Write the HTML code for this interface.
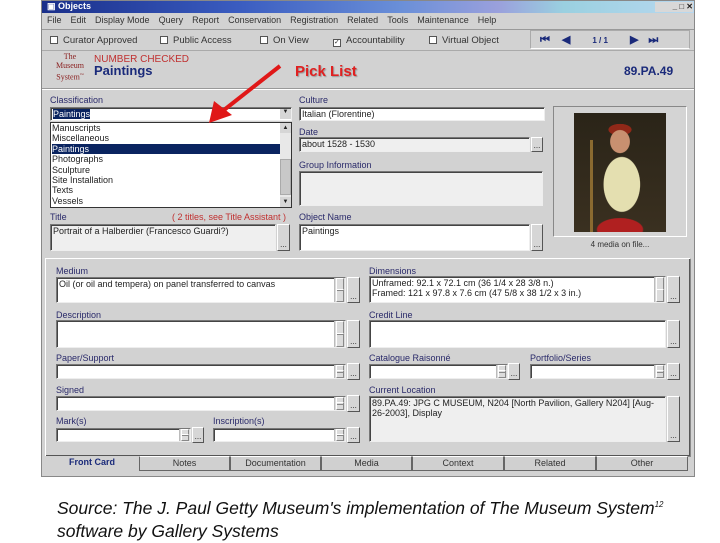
<!DOCTYPE html>
<html><head><style>
*{margin:0;padding:0;box-sizing:border-box}
body{width:720px;height:540px;background:#fff;position:relative;overflow:hidden;font-family:"Liberation Sans",sans-serif;font-size:9px;color:#222}
.a{position:absolute}
.win{left:41px;top:0;width:654px;height:477px;background:#d2d2d2;border:1px solid #888}
.lbl{position:absolute;font-size:9px;color:#2a2a6a;white-space:nowrap}
.box{position:absolute;background:#fff;border:1px solid #777;border-right-color:#eee;border-bottom-color:#eee;box-shadow:inset 1px 1px 0 #444;font-size:9px;padding:1px 2px;white-space:nowrap;overflow:hidden}
.g{background:#efefef}
.btn{position:absolute;background:#d6d6d6;border:1px solid;border-color:#fff #555 #555 #fff;font-size:8px;text-align:center;line-height:6px}
.btn:after{content:"...";position:absolute;bottom:2px;left:0;right:0}
.spin{position:absolute;width:11px;background:#dcdcdc;border-left:1px solid #bbb}
.spin:before,.spin:after{content:"";position:absolute;left:1px;right:1px;height:45%;border:1px solid;border-color:#fff #888 #888 #fff}
.spin:before{top:0}.spin:after{bottom:0}
.tab{position:absolute;top:456px;height:15px;border:1px solid #666;border-top-color:#fff;background:#d0d0d0;font-size:9px;text-align:center;line-height:13px;color:#333}
.cb{position:absolute;top:35px;font-size:9.5px;color:#333;white-space:nowrap}
.cb i{display:inline-block;width:8px;height:8px;border:1px solid #555;background:#fff;margin-right:5px;vertical-align:-1px;font-style:normal;font-size:7px;line-height:6px}
.menu span{margin-right:9px}
</style></head><body>
<div class="a win"></div>
<div class="a" style="left:42px;top:1px;width:652px;height:12px;background:linear-gradient(90deg,#1a2f8a,#3a5cc0 30%,#6a8fd8 55%,#9aa0dc 70%,#9ad0e0 80%,#b8d8f0)"></div>
<div class="a" style="left:47px;top:1px;color:#fff;font-weight:bold;font-size:9px">▣ Objects</div>
<div class="a" style="left:655px;top:2px;width:38px;height:10px;background:#d8d8d8;font-size:8px;text-align:right;font-weight:bold">_ □ ✕</div>
<div class="a menu" style="left:47px;top:15px;font-size:9px;color:#333;white-space:nowrap"><span>File</span><span>Edit</span><span>Display Mode</span><span>Query</span><span>Report</span><span>Conservation</span><span>Registration</span><span>Related</span><span>Tools</span><span>Maintenance</span><span>Help</span></div>
<div class="a" style="left:42px;top:29px;width:652px;height:1px;background:#999"></div>
<div class="cb" style="left:50px"><i></i>Curator Approved</div>
<div class="cb" style="left:160px"><i></i>Public Access</div>
<div class="cb" style="left:260px"><i></i>On View</div>
<div class="cb" style="left:333px"><i>✓</i>Accountability</div>
<div class="cb" style="left:429px"><i></i>Virtual Object</div>
<div class="a" style="left:530px;top:30px;width:160px;height:19px;border:1px solid #aaa;border-bottom-color:#fff"></div>
<div class="a" style="left:540px;top:33px;color:#1a2a7a;font-size:11px;font-weight:bold;white-space:nowrap">⏮<span style="margin-left:12px">◀</span><span style="margin-left:22px;font-size:8px">1 / 1</span><span style="margin-left:22px">▶</span><span style="margin-left:10px">⏭</span></div>
<div class="a" style="left:42px;top:50px;width:652px;height:1px;background:#aaa"></div>
<div class="a" style="left:51px;top:52px;width:38px;text-align:center;font-family:'Liberation Serif',serif;color:#8a2020;font-size:8px;line-height:9px">The<br>Museum<br>System<sup style="font-size:4px">™</sup></div>
<div class="a" style="left:94px;top:54px;color:#c03030;font-size:10px">NUMBER CHECKED</div>
<div class="a" style="left:94px;top:63px;color:#1a2a7a;font-size:13px;font-weight:bold">Paintings</div>
<div class="a" style="left:295px;top:63px;color:#e02020;font-size:15px;font-weight:bold;text-shadow:1px 1px 1px #999">Pick List</div>
<div class="a" style="left:624px;top:64px;color:#1a2a7a;font-size:12px;font-weight:bold">89.PA.49</div>
<div class="a" style="left:42px;top:88px;width:652px;height:2px;border-top:1px solid #999;border-bottom:1px solid #fff"></div>

<div class="lbl" style="left:50px;top:95px">Classification</div>
<div class="box" style="left:50px;top:107px;width:242px;height:14px"><span style="background:#0a2460;color:#fff">Paintings</span></div>
<div class="a" style="left:280px;top:109px;width:11px;height:10px;background:#d6d6d6;font-size:6px;text-align:center">▼</div>
<div class="a" style="left:50px;top:122px;width:242px;height:86px;background:#fff;border:1px solid #333;font-size:9px;line-height:10.4px;padding-left:1px">
Manuscripts<br>Miscellaneous<br><div style="background:#0a2460;color:#fff;width:228px">Paintings</div>Photographs<br>Sculpture<br>Site Installation<br>Texts<br>Vessels
<div class="a" style="right:0;top:0;width:11px;height:84px;background:#e8e8e8"><div style="height:10px;background:#d6d6d6;font-size:6px;text-align:center">▲</div><div style="margin-top:26px;height:36px;background:#c8c8c8;border:1px solid #aaa"></div><div style="position:absolute;bottom:0;width:11px;height:10px;background:#d6d6d6;font-size:6px;text-align:center">▼</div></div></div>
<svg class="a" style="left:200px;top:60px" width="90" height="70"><line x1="80" y1="6" x2="24" y2="50" stroke="#e01818" stroke-width="4"/><polygon points="9,63 14,41 32,55" fill="#e01818"/></svg>
<div class="lbl" style="left:50px;top:212px">Title</div>
<div class="lbl" style="left:172px;top:212px;color:#c03030">( 2 titles, see Title Assistant )</div>
<div class="box g" style="left:50px;top:224px;width:226px;height:27px">Portrait of a Halberdier (Francesco Guardi?)</div>
<div class="btn" style="left:277px;top:224px;width:13px;height:27px"></div>

<div class="lbl" style="left:299px;top:95px">Culture</div>
<div class="box" style="left:299px;top:107px;width:246px;height:14px">Italian (Florentine)</div>
<div class="lbl" style="left:299px;top:127px">Date</div>
<div class="box g" style="left:299px;top:137px;width:231px;height:15px">about 1528 - 1530</div>
<div class="btn" style="left:531px;top:137px;width:12px;height:15px"></div>
<div class="lbl" style="left:299px;top:160px">Group Information</div>
<div class="box g" style="left:299px;top:171px;width:244px;height:35px"></div>
<div class="lbl" style="left:299px;top:212px">Object Name</div>
<div class="box" style="left:299px;top:224px;width:231px;height:27px">Paintings</div>
<div class="btn" style="left:531px;top:224px;width:12px;height:27px"></div>

<div class="a" style="left:553px;top:106px;width:134px;height:131px;border:1px solid #888;border-right-color:#fff;border-bottom-color:#fff;background:#d4d4d4"></div>
<div class="a" style="left:574px;top:113px;width:92px;height:119px;background:radial-gradient(ellipse 30px 45px at 52% 60%,#e4dfb0 0 60%,transparent 62%),radial-gradient(ellipse 12px 14px at 50% 24%,#c89070 0 80%,transparent 85%),radial-gradient(ellipse 14px 7px at 50% 14%,#902818 0 80%,transparent 85%),radial-gradient(ellipse 28px 14px at 50% 98%,#b02020 0 80%,transparent 85%),linear-gradient(#2a2418,#3a3020)"></div>
<div class="a" style="left:590px;top:140px;width:3px;height:92px;background:#8a6a30"></div>
<div class="a" style="left:553px;top:240px;width:134px;text-align:center;font-size:8px;color:#333">4 media on file...</div>

<div class="a" style="left:45px;top:258px;width:646px;height:199px;border:1px solid #888;border-left-color:#fff;border-top-color:#fff;box-shadow:inset -1px -1px 0 #555"></div>
<div class="lbl" style="left:56px;top:266px">Medium</div>
<div class="box" style="left:56px;top:277px;width:290px;height:26px">Oil (or oil and tempera) on panel transferred to canvas</div>
<div class="spin" style="left:334px;top:278px;height:24px"></div>
<div class="btn" style="left:347px;top:277px;width:13px;height:26px"></div>
<div class="lbl" style="left:56px;top:310px">Description</div>
<div class="box" style="left:56px;top:320px;width:290px;height:28px"></div>
<div class="spin" style="left:334px;top:321px;height:26px"></div>
<div class="btn" style="left:347px;top:320px;width:13px;height:28px"></div>
<div class="lbl" style="left:56px;top:353px">Paper/Support</div>
<div class="box" style="left:56px;top:364px;width:290px;height:15px"></div>
<div class="spin" style="left:334px;top:365px;height:13px"></div>
<div class="btn" style="left:347px;top:363px;width:13px;height:17px"></div>
<div class="lbl" style="left:56px;top:385px">Signed</div>
<div class="box" style="left:56px;top:396px;width:290px;height:15px"></div>
<div class="spin" style="left:334px;top:397px;height:13px"></div>
<div class="btn" style="left:347px;top:395px;width:13px;height:17px"></div>
<div class="lbl" style="left:56px;top:416px">Mark(s)</div>
<div class="box" style="left:56px;top:428px;width:135px;height:14px"></div>
<div class="spin" style="left:179px;top:429px;height:12px"></div>
<div class="btn" style="left:192px;top:427px;width:12px;height:16px"></div>
<div class="lbl" style="left:213px;top:416px">Inscription(s)</div>
<div class="box" style="left:213px;top:428px;width:133px;height:14px"></div>
<div class="spin" style="left:334px;top:429px;height:12px"></div>
<div class="btn" style="left:347px;top:427px;width:13px;height:16px"></div>

<div class="lbl" style="left:369px;top:266px">Dimensions</div>
<div class="box" style="left:369px;top:276px;width:297px;height:27px;line-height:10px">Unframed: 92.1 x 72.1 cm (36 1/4 x 28 3/8 n.)<br>Framed: 121 x 97.8 x 7.6 cm (47 5/8 x 38 1/2 x 3 in.)</div>
<div class="spin" style="left:654px;top:277px;height:25px"></div>
<div class="btn" style="left:667px;top:276px;width:13px;height:27px"></div>
<div class="lbl" style="left:369px;top:310px">Credit Line</div>
<div class="box" style="left:369px;top:320px;width:297px;height:28px"></div>
<div class="btn" style="left:667px;top:320px;width:13px;height:28px"></div>
<div class="lbl" style="left:369px;top:353px">Catalogue Raisonné</div>
<div class="box" style="left:369px;top:364px;width:139px;height:15px"></div>
<div class="spin" style="left:496px;top:365px;height:13px"></div>
<div class="btn" style="left:508px;top:363px;width:12px;height:17px"></div>
<div class="lbl" style="left:530px;top:353px">Portfolio/Series</div>
<div class="box" style="left:530px;top:364px;width:136px;height:15px"></div>
<div class="spin" style="left:654px;top:365px;height:13px"></div>
<div class="btn" style="left:667px;top:363px;width:13px;height:17px"></div>
<div class="lbl" style="left:369px;top:385px">Current Location</div>
<div class="box g" style="left:369px;top:396px;width:297px;height:46px;white-space:normal;line-height:10px">89.PA.49: JPG C MUSEUM, N204 [North Pavilion, Gallery N204] [Aug-26-2003], Display</div>
<div class="btn" style="left:667px;top:396px;width:13px;height:46px"></div>

<div class="tab" style="left:45px;width:94px;border:none;background:#d2d2d2;font-weight:bold;color:#1a2a7a">Front Card</div>
<div class="tab" style="left:139px;width:91px">Notes</div>
<div class="tab" style="left:230px;width:91px">Documentation</div>
<div class="tab" style="left:321px;width:91px">Media</div>
<div class="tab" style="left:412px;width:92px">Context</div>
<div class="tab" style="left:504px;width:92px">Related</div>
<div class="tab" style="left:596px;width:92px">Other</div>

<div class="a" style="left:57px;top:493px;font-size:17.5px;font-style:italic;color:#111;line-height:23px;white-space:nowrap">Source: The J. Paul Getty Museum's implementation of The Museum System<sup style="font-size:8px">12</sup><br>software by Gallery Systems</div>
</body></html>
